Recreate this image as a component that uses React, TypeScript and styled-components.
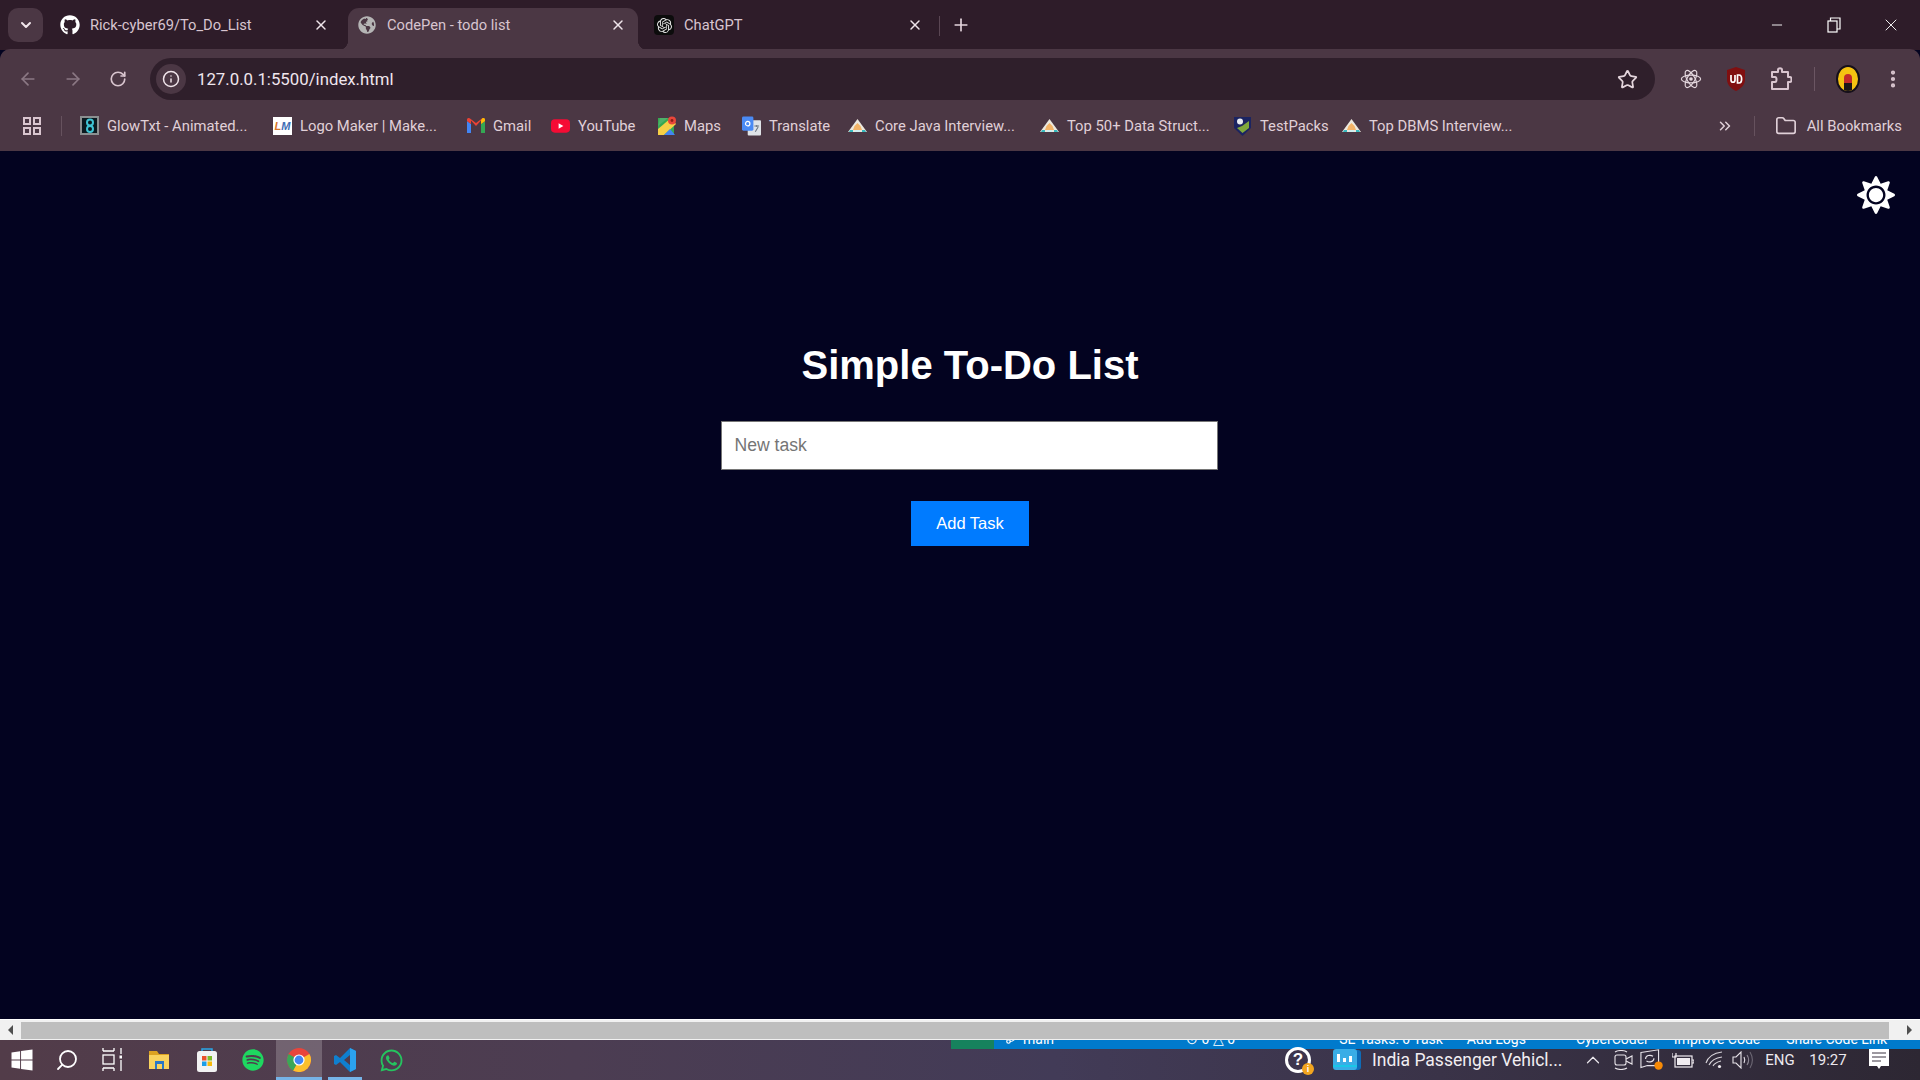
import React from 'react';
import styled, { createGlobalStyle } from 'styled-components';
import {
    ArrowLeft,
    ArrowRight,
    ChevronDown,
    ChevronUp,
    ChevronsRight,
    EllipsisVertical,
    Folder,
    GitBranch,
    Info,
    Minus,
    Plus,
    RotateCw,
    Search,
    Star,
    X,
} from 'lucide-react';
import { FaGithub, FaGlobeAmericas, FaSpotify, FaSun, FaWhatsapp, FaWindows } from 'react-icons/fa';
import { SiOpenai } from 'react-icons/si';

const UI_FONT = `Roboto, "Liberation Sans", sans-serif`;
const PAGE_FONT = `"Liberation Sans", Arial, sans-serif`;

const GlobalStyle = createGlobalStyle`
    html, body {
        margin: 0;
        height: 100%;
        overflow: hidden;
        background: #030320;
    }
    * {
        box-sizing: border-box;
    }
`;

const Screen = styled.div`
    width: 1920px;
    height: 1080px;
    display: flex;
    flex-direction: column;
    font-family: ${UI_FONT};
`;

/* ---------- tab strip ---------- */

const TabStrip = styled.div`
    height: 50px;
    flex: none;
    display: flex;
    align-items: flex-end;
    background: #2e1c29;
    color: #d8c5d0;
`;

const TabSearch = styled.div`
    width: 35px;
    height: 34px;
    margin: 0 8px 8px;
    border-radius: 10px;
    background: #4b3744;
    display: flex;
    align-items: center;
    justify-content: center;
    color: #f2e6ec;
`;

const Tab = styled.div<{ $active?: boolean }>`
    position: relative;
    width: 290px;
    height: 42px;
    margin-right: 7px;
    padding: 0 12px 8px 9px;
    display: flex;
    align-items: center;
    gap: 10px;
    font-size: 14.7px;
    border-radius: 11px 11px 0 0;
    background: ${p => (p.$active ? '#4b3744' : 'transparent')};

    ${p =>
        p.$active &&
        `
        &::before, &::after {
            content: '';
            position: absolute;
            bottom: 0;
            width: 10px;
            height: 10px;
        }
        &::before {
            left: -10px;
            background: radial-gradient(circle at 0 0, transparent 10px, #4b3744 10.5px);
        }
        &::after {
            right: -10px;
            background: radial-gradient(circle at 100% 0, transparent 10px, #4b3744 10.5px);
        }
    `}
`;

const Favicon = styled.span<{ $dark?: boolean }>`
    width: 20px;
    height: 20px;
    flex: none;
    display: flex;
    align-items: center;
    justify-content: center;
    border-radius: 4px;
    background: ${p => (p.$dark ? '#0c0c0c' : 'transparent')};
`;

const TabClose = styled.span`
    margin-left: auto;
    width: 16px;
    height: 16px;
    display: flex;
    align-items: center;
    justify-content: center;
    color: #efe4ea;
`;

const TabDivider = styled.span`
    width: 1px;
    height: 20px;
    margin: 0 0 14px -3px;
    background: #5a4653;
`;

const NewTab = styled.span`
    width: 20px;
    margin: 0 0 15px 11px;
    display: flex;
    justify-content: center;
    color: #e4d4dc;
`;

const WindowControls = styled.div`
    margin-left: auto;
    height: 50px;
    padding-right: 1px;
    display: flex;
    align-items: center;
    color: #fff;
`;

const WindowButton = styled.span`
    width: 57px;
    display: flex;
    justify-content: center;
`;

/* ---------- toolbar ---------- */

const Toolbar = styled.div`
    height: 50px;
    flex: none;
    padding: 8px 5px 0;
    display: flex;
    background: #4b3744;
    border-radius: 10px 10px 0 0;
    box-shadow: 0 -1px 0 #4b3744;
    color: #d9c5cf;
`;

const ToolSlot = styled.span<{ $dim?: boolean }>`
    width: 45px;
    flex: none;
    display: flex;
    align-items: center;
    justify-content: center;
    color: ${p => (p.$dim ? '#8b7884' : '#d9c5cf')};
`;

const Omnibox = styled.div`
    flex: 1;
    height: 42px;
    margin: 0 13px 0 10px;
    padding: 0 17px 0 6px;
    display: flex;
    align-items: center;
    border-radius: 21px;
    background: #2f1f2b;
`;

const SiteInfo = styled.span`
    width: 30px;
    height: 30px;
    border-radius: 50%;
    background: #4b3744;
    display: flex;
    align-items: center;
    justify-content: center;
    color: #f0e4ea;
`;

const Address = styled.span`
    margin-left: 11px;
    font-size: 16.8px;
    color: #efe6ee;
`;

const StarButton = styled.span`
    margin-left: auto;
    display: flex;
    color: #e5d6dd;
`;

const ToolDivider = styled.span`
    width: 1px;
    height: 24px;
    margin: 9px 10px 0 11px;
    background: #6b5663;
`;

const Avatar = styled.span`
    width: 24px;
    height: 28px;
    border-radius: 50%;
    background: #f5c211;
    border: 2px solid #16101a;
    display: flex;
    align-items: flex-end;
    justify-content: center;
    overflow: hidden;
`;

const AvatarFigure = styled.span`
    width: 8px;
    height: 17px;
    border-radius: 4px 4px 0 0;
    background: linear-gradient(#c22a2a 55%, #1b1518 55%);
`;

/* ---------- bookmarks ---------- */

const BookmarksBar = styled.div`
    height: 51px;
    flex: none;
    padding: 0 18px 0 23px;
    display: flex;
    align-items: center;
    background: #4b3744;
    color: #e0d0d8;
    font-size: 14.8px;
`;

const BarDivider = styled.span<{ $left: number; $right: number }>`
    width: 1px;
    height: 20px;
    margin: 0 ${p => p.$right}px 0 ${p => p.$left}px;
    background: #66525e;
`;

const Bookmark = styled.span<{ $w: number }>`
    width: ${p => p.$w}px;
    flex: none;
    display: flex;
    align-items: center;
    gap: 8px;
    white-space: nowrap;
`;

const BookmarkIcon = styled.span`
    width: 19px;
    height: 19px;
    flex: none;
    display: flex;
    align-items: center;
    justify-content: center;
`;

const LmLogo = styled.span`
    width: 20px;
    height: 18px;
    background: #fff;
    color: #d9772b;
    font: italic bold 11px ${PAGE_FONT};
    display: flex;
    align-items: center;
    justify-content: center;
`;

const LmBlue = styled.span`
    color: #3f6fb5;
`;

const BookmarksEnd = styled.div`
    margin-left: auto;
    display: flex;
    align-items: center;
`;

const AllBookmarks = styled.span`
    display: flex;
    align-items: center;
    gap: 10px;
`;

/* ---------- page ---------- */

const Main = styled.main`
    flex: 1;
    min-height: 0;
    padding-left: 20px;
    display: flex;
    flex-direction: column;
    align-items: center;
    background: #030320;
    font-family: ${PAGE_FONT};
`;

const ThemeRow = styled.div`
    align-self: flex-end;
    height: 38px;
    margin-top: 25px;
    padding-right: 25px;
    color: #fff;
`;

const Title = styled.h1`
    margin: 128px 0 33px;
    font-size: 40px;
    line-height: 46px;
    font-weight: 700;
    color: #fff;
`;

const TaskInput = styled.input`
    width: 497px;
    height: 49px;
    margin-left: -2px;
    padding: 0 13px;
    border: 1px solid #767676;
    background: #fff;
    font-family: ${PAGE_FONT};
    font-size: 17.6px;
    outline: none;

    &::placeholder {
        color: #757575;
    }
`;

const AddButton = styled.button`
    width: 118px;
    height: 45px;
    margin-top: 31px;
    border: 0;
    background: #007bff;
    color: #fff;
    font-family: ${PAGE_FONT};
    font-size: 16.5px;
`;

/* ---------- scrollbar ---------- */

const Scrollbar = styled.div`
    height: 21px;
    flex: none;
    display: flex;
    align-items: center;
    background: #f1f1f1;
    border-top: 1px solid #fff;
`;

const ScrollArrow = styled.span<{ $right?: boolean }>`
    width: 21px;
    flex: none;
    display: flex;
    justify-content: center;

    &::before {
        content: '';
        border-style: solid;
        border-width: 5px 0 5px 5px;
        border-color: transparent transparent transparent #505050;
        transform: ${p => (p.$right ? 'none' : 'scaleX(-1)')};
    }
`;

const ScrollThumb = styled.div`
    flex: 1;
    height: 17px;
    margin-right: 10px;
    background: #bebebe;
`;

/* ---------- taskbar ---------- */

const Taskbar = styled.footer`
    position: relative;
    height: 40px;
    flex: none;
    padding-right: 16px;
    display: flex;
    align-items: center;
    background: linear-gradient(90deg, #523c49 0%, #4c3d52 30%, #423b57 55%, #3a3348 75%, #2d2733 100%);
    color: #fff;
`;

const StatusStrip = styled.div`
    position: absolute;
    top: 0;
    left: 951px;
    right: 0;
    height: 9px;
    overflow: hidden;
    display: flex;
    background: #007acc;
    color: #fff;
    font-size: 14px;
    line-height: 16px;
`;

const StatusRemote = styled.span`
    width: 43px;
    flex: none;
    background: #16825d;
`;

const StatusBranch = styled.span`
    width: 16px;
    height: 16px;
    margin: -9px 0 0 11px;
    flex: none;
`;

const StatusText = styled.span<{ $left: number }>`
    margin: -9px 0 0 ${p => p.$left}px;
    white-space: nowrap;
`;

const TaskSlot = styled.span<{ $active?: boolean; $open?: boolean; $w?: number }>`
    position: relative;
    width: ${p => p.$w || 46}px;
    height: 40px;
    flex: none;
    display: flex;
    align-items: center;
    justify-content: center;
    background: ${p => (p.$active ? 'rgba(255,255,255,0.2)' : 'transparent')};

    &::after {
        content: '';
        display: ${p => (p.$open || p.$active ? 'block' : 'none')};
        position: absolute;
        left: ${p => (p.$active ? 0 : 6)}px;
        right: ${p => (p.$active ? 0 : 6)}px;
        bottom: 0;
        height: 3px;
        background: #76b4e8;
    }
`;

const Tray = styled.div`
    margin-left: auto;
    display: flex;
    align-items: center;
`;

const HelpBadge = styled.span`
    position: relative;
    width: 26px;
    height: 26px;
    margin-right: 22px;
    border-radius: 50%;
    border: 3px solid #fff;
    color: #fff;
    font: bold 17px/20px ${PAGE_FONT};
    text-align: center;
`;

const HelpDot = styled.span`
    position: absolute;
    right: -6px;
    bottom: -5px;
    width: 12px;
    height: 12px;
    border-radius: 50%;
    background: #f2a51f;
    color: #fff;
    font: bold 9px/12px ${PAGE_FONT};
`;

const NewsText = styled.span`
    width: 206px;
    margin-left: 11px;
    font-size: 17.5px;
    white-space: nowrap;
    color: #f2eef2;
`;

const TraySlot = styled.span<{ $w?: number }>`
    width: ${p => p.$w || 30}px;
    flex: none;
    display: flex;
    align-items: center;
    justify-content: center;
    font-size: 15px;
    color: #ece8ee;
`;

/* ---------- drawn icons ---------- */

const AppsIcon = () => (
    <svg width="18" height="18" viewBox="0 0 18 18" fill="none" stroke="#d9c5cf" strokeWidth="2">
        <rect x="1" y="1" width="6" height="6" />
        <rect x="11" y="1" width="6" height="6" />
        <rect x="1" y="11" width="6" height="6" />
        <rect x="11" y="11" width="6" height="6" />
    </svg>
);

const ReactIcon = () => (
    <svg width="22" height="22" viewBox="-12 -12 24 24" fill="none" stroke="#e4d7de" strokeWidth="1.3">
        <circle r="2" fill="#e4d7de" stroke="none" />
        <ellipse rx="10.5" ry="4.2" />
        <ellipse rx="10.5" ry="4.2" transform="rotate(60)" />
        <ellipse rx="10.5" ry="4.2" transform="rotate(120)" />
    </svg>
);

const UBlockIcon = () => (
    <svg width="20" height="24" viewBox="0 0 20 24">
        <path d="M10 0 L19 3 V13 C19 18 14 22 10 24 C6 22 1 18 1 13 V3 Z" fill="#800f10" />
        <path d="M5 8 V13 C5 16 9 16 9 13 V8 M11.5 8 V16 H13 C16.5 16 16.5 8 13 8 Z" fill="none" stroke="#fff" strokeWidth="1.7" />
    </svg>
);

const PuzzleIcon = () => (
    <svg width="22" height="24" viewBox="0 0 22 24" fill="none" stroke="#d9c5cf" strokeWidth="2" strokeLinejoin="round">
        <path d="M2 5 H8 V3 C8 0.5 12 0.5 12 3 V5 H18 V10 H20 C22 10 22 15 20 15 H18 V22 H2 V15 H5 C7 15 7 10 5 10 H2 Z" />
    </svg>
);

const GlowIcon = () => (
    <svg width="19" height="19" viewBox="0 0 19 19">
        <rect width="19" height="19" fill="#8b8f90" />
        <rect x="2" y="2" width="15" height="15" fill="#0a1a20" />
        <circle cx="10" cy="6.5" r="3" fill="none" stroke="#3fc4d4" strokeWidth="2" />
        <circle cx="10" cy="13" r="3" fill="none" stroke="#3fc4d4" strokeWidth="2" />
    </svg>
);

const GmailIcon = () => (
    <svg width="18" height="15" viewBox="0 0 18 15">
        <path d="M0 3 V15 H4 V6 Z" fill="#4285f4" />
        <path d="M18 3 V15 H14 V6 Z" fill="#34a853" />
        <path d="M0 1.5 C0 0 2 -0.5 3 0.5 L9 5 L15 0.5 C16 -0.5 18 0 18 1.5 V3 L14 6 V2.5 L9 8 L4 2.5 V6 L0 3 Z" fill="#ea4335" />
        <path d="M14 2.5 L15 0.5 C16 -0.5 18 0 18 1.5 V3 L14 6 Z" fill="#fbbc04" />
    </svg>
);

const YoutubeIcon = () => (
    <svg width="20" height="14" viewBox="0 0 20 14">
        <rect width="20" height="14" rx="4" fill="#f50b34" />
        <path d="M8 4 L13 7 L8 10 Z" fill="#fff" />
    </svg>
);

const MapsIcon = () => (
    <svg width="18" height="20" viewBox="0 0 18 20">
        <rect x="0" y="2" width="16" height="17" fill="#36a852" />
        <path d="M0 13 L13 2 L18 8 L6 19 H0 Z" fill="#f7d046" />
        <path d="M6 19 L12 13 L17 19 Z" fill="#4285f4" />
        <path d="M2 2 H10 L0 10 Z" fill="#4fb06a" />
        <circle cx="14" cy="4.5" r="4" fill="#e8463a" />
        <circle cx="14" cy="4.5" r="1.4" fill="#8d1f18" />
    </svg>
);

const TranslateIcon = () => (
    <svg width="20" height="20" viewBox="0 0 20 20">
        <rect x="6" y="4" width="14" height="16" rx="1" fill="#dfe3e8" />
        <rect x="0" y="0" width="12" height="15" rx="1.5" fill="#4a8af4" />
        <circle cx="6" cy="7.5" r="2.3" fill="none" stroke="#fff" strokeWidth="1.3" />
        <path d="M13 10 H18 M15.5 9 V11 M14 16 L17 11" stroke="#6a7480" strokeWidth="1.1" fill="none" />
    </svg>
);

const PeakIcon = () => (
    <svg width="19" height="14" viewBox="0 0 19 14">
        <path d="M9.5 0 L19 13 H0 Z" fill="#ece9df" />
        <path d="M6.5 7 L9.5 4 L12.5 7 L14 11 H5 Z" fill="#f3b468" />
        <path d="M2 11 H5 V13 H1 Z M14 11 H17 L18 13 H14 Z" fill="#37b9bf" />
        <path d="M7 11 H12 V13 H7 Z" fill="#cfeef0" />
    </svg>
);

const ShieldIcon = () => (
    <svg width="19" height="20" viewBox="0 0 19 20">
        <path d="M1 1 H18 V12 L9.5 20 L1 12 Z" fill="#1b2461" />
        <path d="M9 10 L16 5 V12 L9.5 17 L4 12 Z" fill="#7fa83c" />
        <circle cx="7" cy="5.5" r="3" fill="#e9edf2" />
    </svg>
);

const TaskViewIcon = () => (
    <svg width="20" height="24" viewBox="0 0 20 24" fill="none" stroke="#fff" strokeWidth="1.3">
        <path d="M1 3 H12 M1 0 V3 M12 0 V3" />
        <rect x="1" y="7" width="11" height="9" />
        <path d="M1 20 H12 M1 20 V23 M12 20 V23" />
        <path d="M19 0 V6 M19 12 V23" />
        <rect x="17.5" y="7.5" width="3" height="3" fill="#fff" stroke="none" />
    </svg>
);

const ExplorerIcon = () => (
    <svg width="20" height="20" viewBox="0 0 20 20">
        <path d="M0 1 H8 L10 4 H20 V9 H0 Z" fill="#dca221" />
        <path d="M0 5 H20 V19 H0 Z" fill="#f9d35e" />
        <path d="M6 11 H15 V19 H13 V14 H8 V19 H6 Z" fill="#2a78c7" />
        <rect x="8" y="14" width="5" height="5" fill="#f9d35e" />
    </svg>
);

const StoreIcon = () => (
    <svg width="20" height="24" viewBox="0 0 20 24">
        <path d="M5 4 V1 H15 V4" fill="none" stroke="#2aa7e8" strokeWidth="1.5" />
        <rect x="0" y="3" width="20" height="21" rx="2.5" fill="#f2f2f2" />
        <rect x="5" y="8" width="4.5" height="4.5" fill="#e9502a" />
        <rect x="10.5" y="8" width="4.5" height="4.5" fill="#7dbb28" />
        <rect x="5" y="13.5" width="4.5" height="4.5" fill="#1b9de8" />
        <rect x="10.5" y="13.5" width="4.5" height="4.5" fill="#f7b90b" />
    </svg>
);

const ChromeIcon = () => (
    <svg width="24" height="24" viewBox="-12 -12 24 24">
        <circle r="12" fill="#e8453c" />
        <path d="M0 0 L-10.4 -6 A12 12 0 0 0 -6 10.4 Z" fill="#3aa757" />
        <path d="M0 0 L-6 10.4 A12 12 0 0 0 10.4 -6 Z" fill="#fbc02d" />
        <path d="M0 0 L-6 10.4 A12 12 0 0 1 -10.4 6 Z" fill="#3aa757" />
        <circle r="5.6" fill="#fff" />
        <circle r="4.4" fill="#4285f4" />
    </svg>
);

const VsCodeIcon = () => (
    <svg width="22" height="24" viewBox="0 0 22 24">
        <path d="M16 0 L22 3 V21 L16 24 L6 14 L2 17 L0 16 V8 L2 7 L6 10 Z M16 7 L10 12 L16 17 Z" fill="#0f7fcf" />
        <path d="M16 0 L22 3 V21 L16 24 Z" fill="#2ba2ee" />
    </svg>
);

const NewsIcon = () => (
    <svg width="28" height="22" viewBox="0 0 28 22">
        <rect x="3" y="1" width="25" height="20" rx="3" fill="#0e6cb8" />
        <rect x="0" y="0" width="24" height="21" rx="3" fill="#39ade6" />
        <rect x="4" y="5" width="3" height="8" fill="#fff" />
        <rect x="10" y="9" width="3" height="4" fill="#fff" />
        <rect x="16" y="7" width="3" height="6" fill="#fff" />
        <rect x="0" y="16" width="24" height="2" fill="#19c7e8" />
    </svg>
);

const MeetIcon = () => (
    <svg width="24" height="20" viewBox="0 0 24 20" fill="none" stroke="#e8e4ea" strokeWidth="1.1">
        <rect x="3" y="5" width="11" height="10" rx="2" />
        <path d="M14 9 L20 6 V14 L14 11" />
        <path d="M3 2 C6 0 12 0 15 2 M3 18 C6 20 12 20 15 18" />
    </svg>
);

const SyncIcon = () => (
    <svg width="28" height="24" viewBox="0 0 28 24" fill="none" stroke="#e8e4ea" strokeWidth="1.2">
        <path d="M1 4 L20 1 V18 H8 L1 20 Z" />
        <path d="M6 11 C6 7 11 6 14 8 M15 10 C15 14 10 15 7 13" />
        <circle cx="20" cy="18" r="4.5" fill="#f78a06" stroke="none" />
    </svg>
);

const BatteryIcon = () => (
    <svg width="22" height="16" viewBox="0 0 22 16" fill="none" stroke="#f0ecf0" strokeWidth="1.2">
        <rect x="3" y="4" width="17" height="11" />
        <rect x="5" y="6" width="13" height="7" fill="#f0ecf0" stroke="none" />
        <path d="M0 1 V5 H4 V1 M20 8 H22 V11 H20" />
    </svg>
);

const WifiIcon = () => (
    <svg width="18" height="18" viewBox="0 0 18 18" fill="none" stroke="#d8d4da" strokeWidth="1.1">
        <path d="M1 12 C3 6 9 2 17 1 M4 14 C6 10 10 7 17 6 M8 15 C9 13 12 11 16 10" />
        <circle cx="14.5" cy="15.5" r="1.6" fill="#f0ecf0" stroke="none" />
    </svg>
);

const VolumeIcon = () => (
    <svg width="22" height="18" viewBox="0 0 22 18" fill="none" stroke="#e8e4ea" strokeWidth="1.1">
        <path d="M1 6 H4 L9 1 V17 L4 12 H1 Z" />
        <path d="M12 6 C13 8 13 10 12 12" />
        <path d="M15 4 C17 7 17 11 15 14" stroke="#8d8894" />
        <path d="M18 1 C21 6 21 12 18 17" stroke="#6d6874" />
    </svg>
);

const NotifyIcon = () => (
    <svg width="20" height="22" viewBox="0 0 20 22">
        <path d="M0 0 H20 V17 H12 L10 20 L8 17 H0 Z" fill="#fff" />
        <path d="M3 4 H17 M3 8 H17 M3 12 H12" stroke="#3a3340" strokeWidth="1" />
    </svg>
);

const tabs = [
    { title: 'Rick-cyber69/To_Do_List', icon: <FaGithub size={20} color="#fff" /> },
    { title: 'CodePen - todo list', icon: <FaGlobeAmericas size={18} color="#b5b5b5" />, active: true },
    { title: 'ChatGPT', icon: <SiOpenai size={15} color="#e8e8e8" />, dark: true },
];

const bookmarks = [
    { label: 'GlowTxt - Animated...', icon: <GlowIcon />, width: 193 },
    {
        label: 'Logo Maker | Make...',
        icon: (
            <LmLogo>
                L<LmBlue>M</LmBlue>
            </LmLogo>
        ),
        width: 193,
    },
    { label: 'Gmail', icon: <GmailIcon />, width: 85 },
    { label: 'YouTube', icon: <YoutubeIcon />, width: 106 },
    { label: 'Maps', icon: <MapsIcon />, width: 85 },
    { label: 'Translate', icon: <TranslateIcon />, width: 106 },
    { label: 'Core Java Interview...', icon: <PeakIcon />, width: 192 },
    { label: 'Top 50+ Data Struct...', icon: <PeakIcon />, width: 193 },
    { label: 'TestPacks', icon: <ShieldIcon />, width: 109 },
    { label: 'Top DBMS Interview...', icon: <PeakIcon />, width: 190 },
];

const statusItems = [
    { text: 'main', left: 2 },
    { text: '⊙ 0 △ 0', left: 132 },
    { text: 'SE Tasks: 0 Task', left: 104 },
    { text: 'Add Logs', left: 24 },
    { text: 'CyberCoder', left: 50 },
    { text: 'Improve Code', left: 25 },
    { text: 'Share Code Link', left: 26 },
];

export default function App() {
    return (
        <Screen>
            <GlobalStyle />
            <TabStrip>
                <TabSearch>
                    <ChevronDown size={16} strokeWidth={3} />
                </TabSearch>
                {tabs.map(tab => (
                    <Tab key={tab.title} $active={tab.active}>
                        <Favicon $dark={tab.dark}>{tab.icon}</Favicon>
                        {tab.title}
                        <TabClose>
                            <X size={16} strokeWidth={2.2} />
                        </TabClose>
                    </Tab>
                ))}
                <TabDivider />
                <NewTab>
                    <Plus size={20} strokeWidth={2} />
                </NewTab>
                <WindowControls>
                    <WindowButton>
                        <Minus size={16} strokeWidth={1.4} />
                    </WindowButton>
                    <WindowButton>
                        <svg width="14" height="16" viewBox="0 0 14 16" fill="none" stroke="#fff" strokeWidth="1.2">
                            <rect x="1" y="4" width="9" height="11" />
                            <path d="M3.5 4 V1 H13 V12 H10" />
                        </svg>
                    </WindowButton>
                    <WindowButton>
                        <X size={20} strokeWidth={1.1} />
                    </WindowButton>
                </WindowControls>
            </TabStrip>

            <Toolbar>
                <ToolSlot $dim>
                    <ArrowLeft size={20} />
                </ToolSlot>
                <ToolSlot $dim>
                    <ArrowRight size={20} />
                </ToolSlot>
                <ToolSlot>
                    <RotateCw size={18} strokeWidth={2.2} />
                </ToolSlot>
                <Omnibox>
                    <SiteInfo>
                        <Info size={18} />
                    </SiteInfo>
                    <Address>127.0.0.1:5500/index.html</Address>
                    <StarButton>
                        <Star size={21} strokeWidth={2} />
                    </StarButton>
                </Omnibox>
                <ToolSlot>
                    <ReactIcon />
                </ToolSlot>
                <ToolSlot>
                    <UBlockIcon />
                </ToolSlot>
                <ToolSlot>
                    <PuzzleIcon />
                </ToolSlot>
                <ToolDivider />
                <ToolSlot>
                    <Avatar>
                        <AvatarFigure />
                    </Avatar>
                </ToolSlot>
                <ToolSlot>
                    <EllipsisVertical size={22} strokeWidth={2.6} />
                </ToolSlot>
            </Toolbar>

            <BookmarksBar>
                <AppsIcon />
                <BarDivider $left={20} $right={18} />
                {bookmarks.map(b => (
                    <Bookmark key={b.label} $w={b.width}>
                        <BookmarkIcon>{b.icon}</BookmarkIcon>
                        {b.label}
                    </Bookmark>
                ))}
                <BookmarksEnd>
                    <ChevronsRight size={18} />
                    <BarDivider $left={20} $right={20} />
                    <AllBookmarks>
                        <Folder size={22} strokeWidth={1.8} />
                        All Bookmarks
                    </AllBookmarks>
                </BookmarksEnd>
            </BookmarksBar>

            <Main>
                <ThemeRow>
                    <FaSun size={38} />
                </ThemeRow>
                <Title>Simple To-Do List</Title>
                <TaskInput placeholder="New task" readOnly />
                <AddButton>Add Task</AddButton>
            </Main>

            <Scrollbar>
                <ScrollArrow />
                <ScrollThumb />
                <ScrollArrow $right />
            </Scrollbar>

            <Taskbar>
                <TaskSlot $w={44}>
                    <FaWindows size={24} />
                </TaskSlot>
                <TaskSlot>
                    <Search size={24} strokeWidth={1.8} style={{ transform: 'scaleX(-1)' }} />
                </TaskSlot>
                <TaskSlot $w={44}>
                    <TaskViewIcon />
                </TaskSlot>
                <TaskSlot $w={50}>
                    <ExplorerIcon />
                </TaskSlot>
                <TaskSlot>
                    <StoreIcon />
                </TaskSlot>
                <TaskSlot>
                    <FaSpotify size={22} color="#1ed760" />
                </TaskSlot>
                <TaskSlot $active>
                    <ChromeIcon />
                </TaskSlot>
                <TaskSlot $open>
                    <VsCodeIcon />
                </TaskSlot>
                <TaskSlot>
                    <FaWhatsapp size={25} color="#25c45f" />
                </TaskSlot>

                <StatusStrip>
                    <StatusRemote />
                    <StatusBranch>
                        <GitBranch size={14} />
                    </StatusBranch>
                    {statusItems.map(item => (
                        <StatusText key={item.text} $left={item.left}>
                            {item.text}
                        </StatusText>
                    ))}
                </StatusStrip>

                <Tray>
                    <HelpBadge>
                        ?<HelpDot>i</HelpDot>
                    </HelpBadge>
                    <NewsIcon />
                    <NewsText>India Passenger Vehicl...</NewsText>
                    <TraySlot>
                        <ChevronUp size={22} strokeWidth={1.3} />
                    </TraySlot>
                    <TraySlot $w={32}>
                        <MeetIcon />
                    </TraySlot>
                    <TraySlot $w={26}>
                        <SyncIcon />
                    </TraySlot>
                    <TraySlot $w={34}>
                        <BatteryIcon />
                    </TraySlot>
                    <TraySlot $w={28}>
                        <WifiIcon />
                    </TraySlot>
                    <TraySlot>
                        <VolumeIcon />
                    </TraySlot>
                    <TraySlot $w={44}>ENG</TraySlot>
                    <TraySlot $w={52}>19:27</TraySlot>
                    <TraySlot $w={50}>
                        <NotifyIcon />
                    </TraySlot>
                </Tray>
            </Taskbar>
        </Screen>
    );
}
